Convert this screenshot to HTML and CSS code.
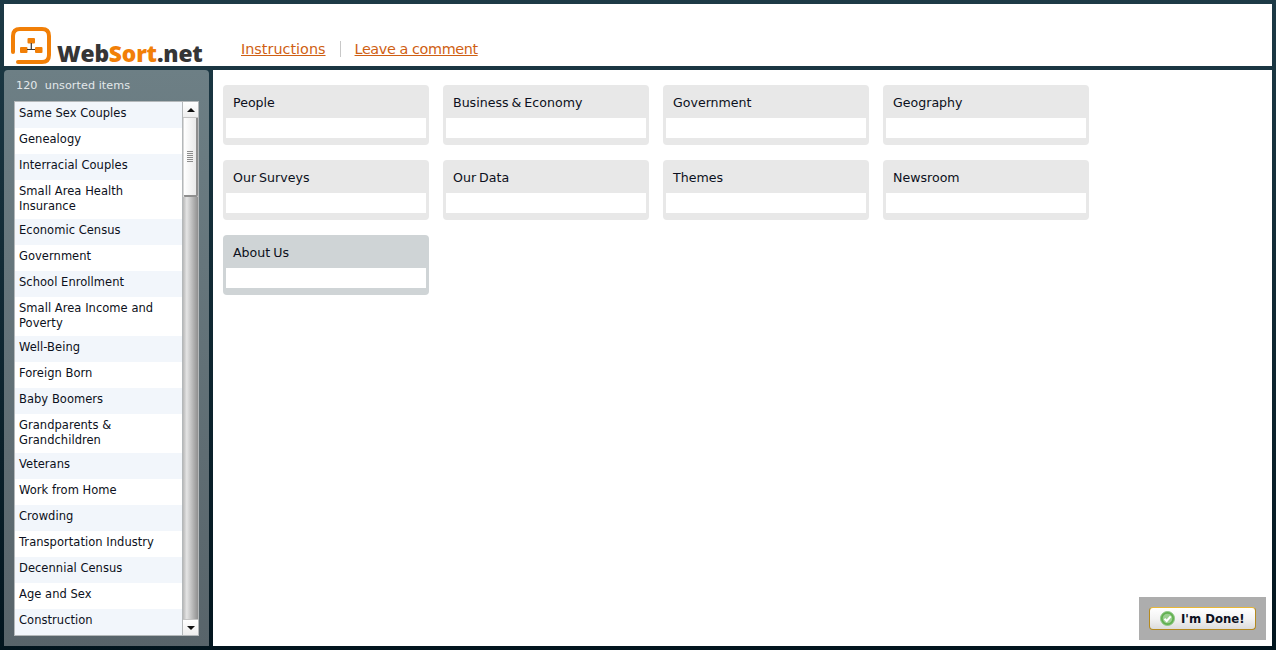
FILE: index.html
```html
<!DOCTYPE html>
<html lang="en">
<head>
<meta charset="utf-8">
<title>WebSort.net</title>
<link rel="stylesheet" href="styles.css">
</head>
<body>
<div class="app">
  <header class="header">
    <div class="logo">
      <svg class="logo-icon" width="40" height="37" viewBox="0 0 40 37">
        <path d="M7 35H31Q38 35 38 28V9Q38 2 31 2H9Q2 2 2 9V25" fill="none" stroke="#f17f07" stroke-width="4" stroke-linecap="round"/>
        <rect x="16.500" y="11" width="7.500" height="5.500" rx="1" fill="#f17f07"/>
        <rect x="9" y="20" width="7.500" height="6" rx="1" fill="#f17f07"/>
        <rect x="24" y="20" width="7.500" height="6" rx="1" fill="#f17f07"/>
        <path d="M20.300 16V22.500M16 22.500H24" stroke="#333" stroke-width="1.200" fill="none"/>
      </svg>
      <span class="logo-text">Web<span class="logo-accent">Sort</span>.net</span>
    </div>
    <nav class="nav">
      <a class="nav-link" href="#">Instructions</a>
      <span class="nav-sep"></span>
      <a class="nav-link nav-link-tight" href="#">Leave a comment</a>
    </nav>
  </header>
  <div class="body-row">
    <aside class="sidebar">
      <div class="count">120&nbsp; unsorted items</div>
      <div class="listbox">
        <ul class="items">
          <li>Same Sex Couples</li>
          <li>Genealogy</li>
          <li>Interracial Couples</li>
          <li>Small Area Health Insurance</li>
          <li>Economic Census</li>
          <li>Government</li>
          <li>School Enrollment</li>
          <li>Small Area Income and Poverty</li>
          <li>Well-Being</li>
          <li>Foreign Born</li>
          <li>Baby Boomers</li>
          <li>Grandparents &amp; Grandchildren</li>
          <li>Veterans</li>
          <li>Work from Home</li>
          <li>Crowding</li>
          <li>Transportation Industry</li>
          <li>Decennial Census</li>
          <li>Age and Sex</li>
          <li>Construction</li>
        </ul>
        <div class="scrollbar">
          <div class="sb-btn"><span class="arrow-up"></span></div>
          <div class="sb-thumb"><span class="grip"></span></div>
          <div class="sb-track"></div>
          <div class="sb-btn"><span class="arrow-down"></span></div>
        </div>
      </div>
    </aside>
    <main class="main">
      <div class="groups">
        <section class="group"><h2>People</h2><div class="drop"></div></section>
        <section class="group"><h2>Business &amp; Economy</h2><div class="drop"></div></section>
        <section class="group"><h2>Government</h2><div class="drop"></div></section>
        <section class="group"><h2>Geography</h2><div class="drop"></div></section>
        <section class="group"><h2>Our Surveys</h2><div class="drop"></div></section>
        <section class="group"><h2>Our Data</h2><div class="drop"></div></section>
        <section class="group"><h2>Themes</h2><div class="drop"></div></section>
        <section class="group"><h2>Newsroom</h2><div class="drop"></div></section>
        <section class="group active"><h2>About Us</h2><div class="drop"></div></section>
      </div>
      <div class="done-box">
        <button class="done-btn" type="button">
          <svg width="15" height="15" viewBox="0 0 15 15">
            <circle cx="7.500" cy="7.500" r="7" fill="#62b04f" stroke="#8fc987"/>
            <circle cx="7.500" cy="7.500" r="4.800" fill="#9ccf90"/>
            <path d="M4.500 7.700L6.700 10L10.700 5.300" fill="none" stroke="#fff" stroke-width="2"/>
          </svg>
          <span>I'm Done!</span>
        </button>
      </div>
    </main>
  </div>
</div>
</body>
</html>
```
FILE: styles.css
```css
* { box-sizing: border-box; }
html, body { margin: 0; height: 100%; }
body {
  background: linear-gradient(#1d3a46, #02151e);
  font-family: "DejaVu Sans", Verdana, sans-serif;
  overflow: hidden;
}
.app {
  height: 650px;
  padding: 4px;
  display: flex;
  flex-direction: column;
  gap: 4px;
}
.header {
  height: 62px;
  background: #fff;
  display: flex;
  align-items: flex-end;
}
.logo {
  display: flex;
  align-items: flex-end;
  width: 237px;
  padding-left: 7px;
  height: 100%;
}
.logo-icon { margin-bottom: 2px; flex: none; }
.logo-text {
  font-family: "Open Sans", sans-serif;
  font-weight: 800;
  font-size: 22.800px;
  line-height: 24px;
  color: #353535;
  margin-left: 6px;
  letter-spacing: -0.2px;
  white-space: nowrap;
}
.logo-accent { color: #f17f07; }
.nav {
  display: flex;
  align-items: center;
  height: 20px;
  margin-bottom: 7px;
}
.nav-link {
  color: #cf5f13;
  font-size: 14.400px;
  line-height: 20px;
}
.nav-link-tight { letter-spacing: -0.4px; }
.nav-sep {
  width: 1px;
  height: 16px;
  background: #c8c8c8;
  margin: 0 14px;
}
.body-row {
  flex: 1;
  min-height: 0;
  display: flex;
  gap: 4px;
}
.sidebar {
  width: 205px;
  flex: none;
  border-radius: 4px 4px 0 0;
  background: linear-gradient(#6d7f85, #58646a);
  padding: 0 10px 10px;
  display: flex;
  flex-direction: column;
}
.count {
  height: 31px;
  line-height: 31px;
  padding-left: 2px;
  color: #e3e8ea;
  font-size: 11.200px;
  letter-spacing: 0.06px;
}
.listbox {
  flex: 1;
  min-height: 0;
  display: flex;
  border: 1px solid #b4b8ba;
  background: #fff;
}
.items {
  list-style: none;
  margin: 0;
  padding: 0;
  flex: 1;
  min-width: 0;
  overflow: hidden;
}
.items li {
  min-height: 26px;
  padding: 4px 18px 5px 4px;
  font-size: 11.500px;
  letter-spacing: 0.04px;
  line-height: 15px;
  color: #0c1020;
}
.items li:nth-child(odd) { background: #f2f6fb; }
.scrollbar {
  width: 16px;
  flex: none;
  display: flex;
  flex-direction: column;
  background: #fff;
  border-left: 1px solid #b4b8ba;
}
.sb-btn {
  height: 16px;
  flex: none;
  display: flex;
  align-items: center;
  justify-content: center;
  background: linear-gradient(#fff, #eee);
  border-bottom: 1px solid #c4c4c4;
}
.sb-btn:last-child { border-bottom: 0; border-top: 1px solid #c4c4c4; }
.arrow-up, .arrow-down {
  width: 0;
  height: 0;
  border-left: 4px solid transparent;
  border-right: 4px solid transparent;
}
.arrow-up { border-bottom: 4px solid #111; }
.arrow-down { border-top: 4px solid #111; }
.sb-thumb {
  height: 79px;
  flex: none;
  display: flex;
  align-items: center;
  justify-content: center;
  background: linear-gradient(90deg, #fff, #e9e9e9);
  border-right: 2px solid #8e8e8e;
  border-bottom: 2px solid #8e8e8e;
  border-left: 1px solid #d8d8d8;
  border-radius: 0 0 2px 2px;
}
.grip {
  width: 6px;
  height: 11px;
  background: repeating-linear-gradient(#8c8c8c 0 1px, transparent 1px 2px);
}
.sb-track {
  flex: 1;
  background: linear-gradient(90deg, #b8b8b8, #e4e4e4 25%, #8f8f8f);
}
.main {
  flex: 1;
  min-width: 0;
  background: #fff;
  padding: 15px 10px;
  position: relative;
}
.groups {
  display: grid;
  grid-template-columns: repeat(4, 206px);
  grid-auto-rows: 60px;
  column-gap: 14px;
  row-gap: 15px;
}
.group {
  background: #e8e8e8;
  border-radius: 4px;
  padding: 0 3px 7px;
  display: flex;
  flex-direction: column;
}
.group.active { background: #cfd4d6; }
.group h2 {
  margin: 0;
  height: 33px;
  flex: none;
  padding-left: 7px;
  font-size: 12.600px;
  font-weight: 400;
  line-height: 35px;
  word-spacing: -1px;
  color: #0c1020;
}
.drop { flex: 1; background: #fff; }
.done-box {
  position: absolute;
  right: 6px;
  bottom: 6px;
  width: 127px;
  height: 43px;
  background: #adadad;
  display: flex;
  align-items: center;
  justify-content: center;
}
.done-btn {
  width: 107px;
  height: 23px;
  padding: 0 0 0 10px;
  display: flex;
  align-items: center;
  gap: 6px;
  background: linear-gradient(#fff, #f3f3f3 50%, #dcdcdc);
  border: 1px solid #b58a1e;
  border-top-color: #e8b838;
  border-radius: 4px;
  font-family: "DejaVu Sans", sans-serif;
  font-size: 11.700px;
  font-weight: 700;
  color: #0c1020;
  white-space: nowrap;
}
```
